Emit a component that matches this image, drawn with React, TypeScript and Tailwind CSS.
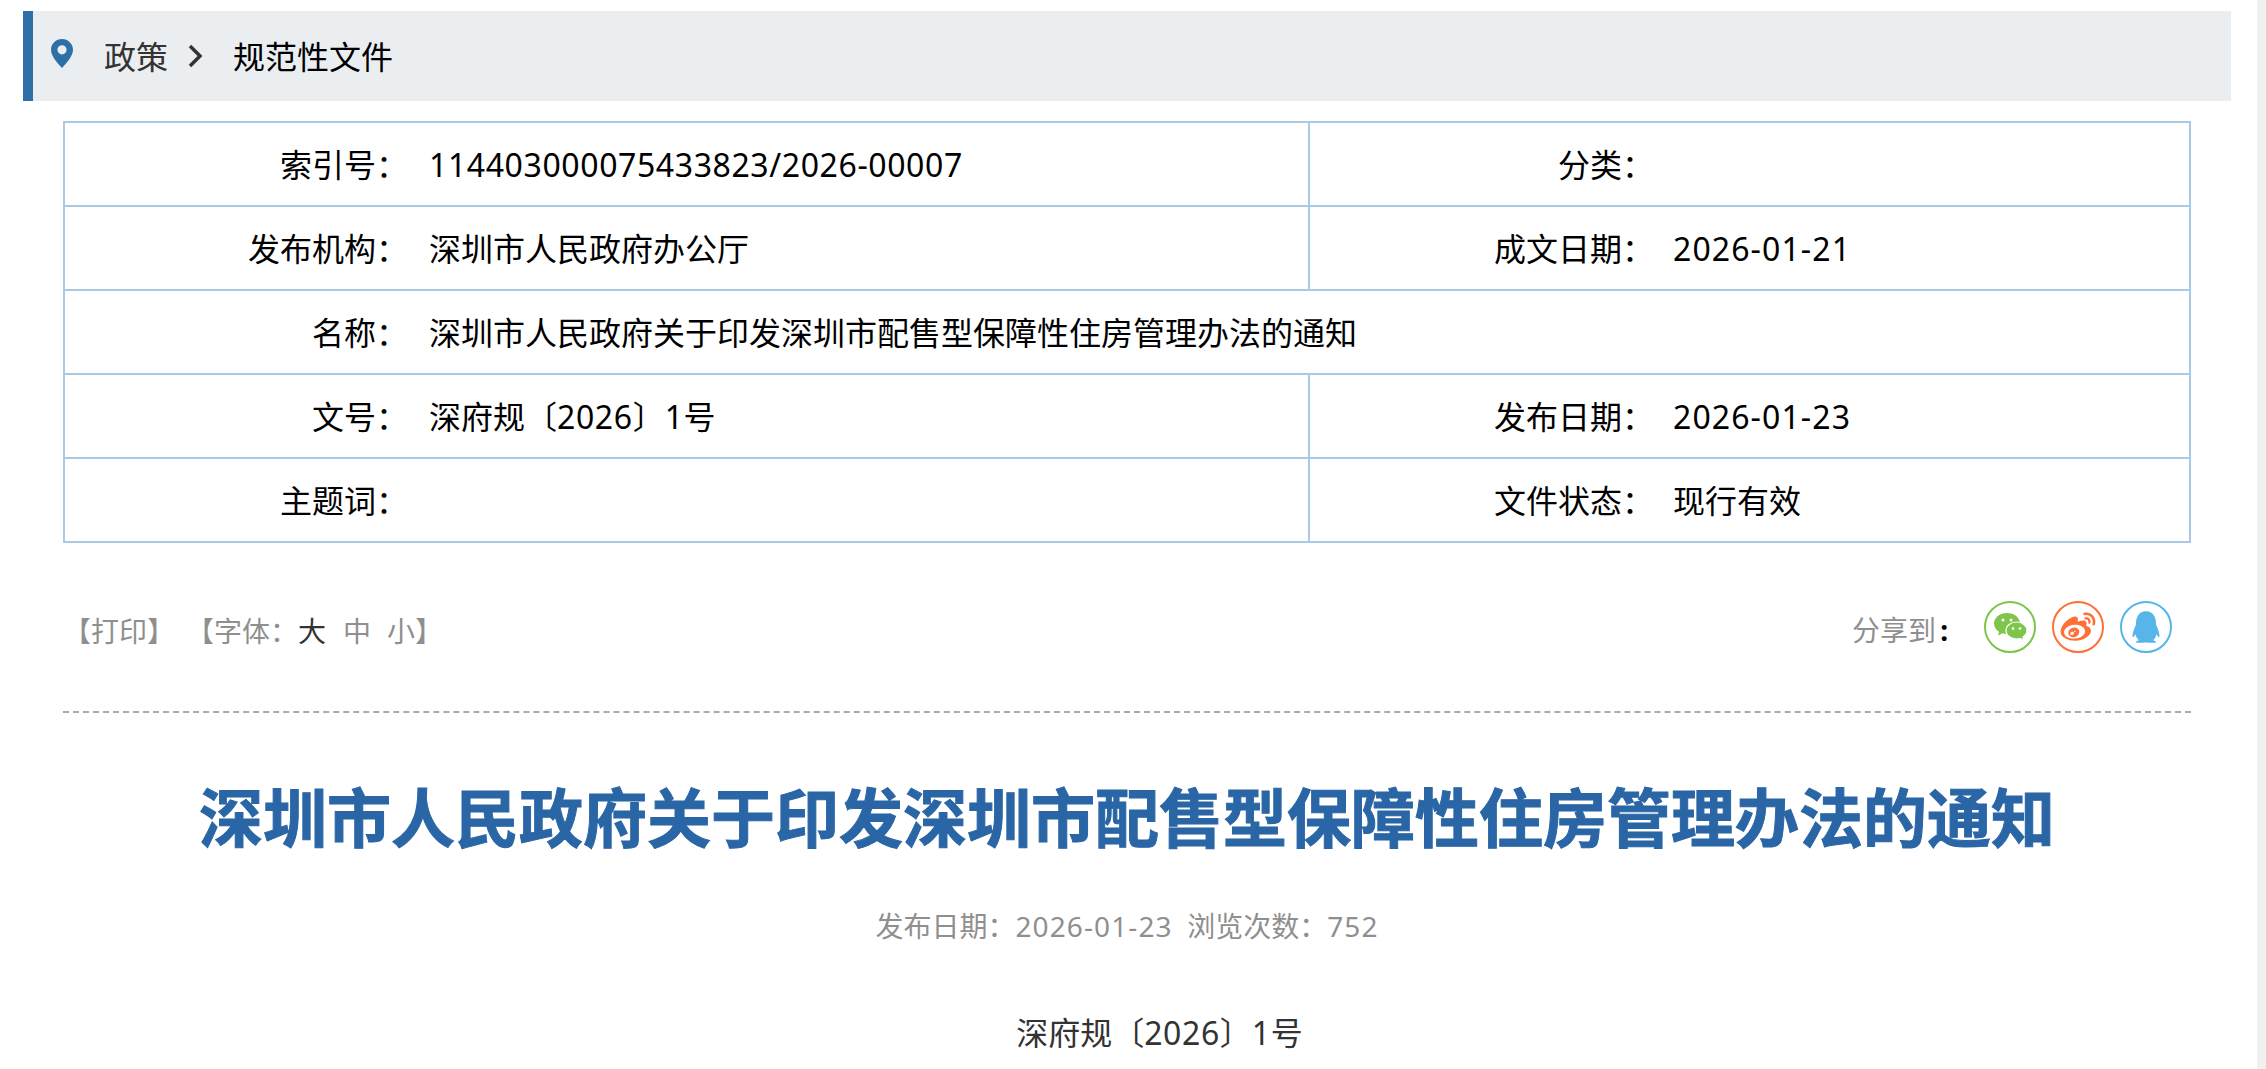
import type { ReactNode } from 'react';
import { RiWeiboFill, RiQqFill } from 'react-icons/ri';

const font = "font-['Noto_Sans','Noto_Sans_CJK_SC',sans-serif]";

function N({ children }: { children: ReactNode }) {
  return <span className="tracking-[0.6px]">{children}</span>;
}

function D({ children }: { children: ReactNode }) {
  return <span className="tracking-[1.1px]">{children}</span>;
}

function Label({ text, right }: { text: string; right?: boolean }) {
  return (
    <td className={`text-right pt-[2px] border-y-2 border-[#a9c9e4] text-black ${right ? 'pr-[19px]' : 'pr-[21px]'}`}>
      {text}
    </td>
  );
}

function Value({ children, span, line }: { children?: ReactNode; span?: number; line?: boolean }) {
  return (
    <td colSpan={span} className={`pt-[2px] border-y-2 border-[#a9c9e4] text-black ${line ? 'border-r-2' : ''}`}>
      {children}
    </td>
  );
}

function WechatIcon() {
  return (
    <svg width="33" height="28" viewBox="0 0 33 28">
      <path fill="#7fc54b" d="M13 0C5.800 0 0 4.700 0 10.500 0 13.900 2 16.900 5 18.800L4 22.500 8.500 20.300C10 20.800 11.500 21 13 21 20.200 21 26 16.300 26 10.500 26 4.700 20.200 0 13 0Z" />
      <path fill="#7fc54b" stroke="#fff" strokeWidth="1.200" d="M22.500 9C16.700 9 12 12.800 12 17.500 12 22.200 16.700 26 22.500 26 23.700 26 24.900 25.800 26 25.500L30 27.500 29 24C31.400 22.400 33 20.100 33 17.500 33 12.800 28.300 9 22.500 9Z" />
      <circle cx="9" cy="7" r="1.500" fill="#fff" />
      <circle cx="17" cy="7" r="1.500" fill="#fff" />
      <circle cx="19" cy="15.500" r="1.300" fill="#fff" />
      <circle cx="26" cy="15.500" r="1.300" fill="#fff" />
    </svg>
  );
}

export default function App() {
  return (
    <div className={`flex h-[1069px] overflow-hidden bg-white ${font}`}>
      <div className="flex-1 min-w-0">
        {/* breadcrumb */}
        <div className="mt-[11px] ml-[23px] w-[2208px] h-[90px] flex items-center bg-[#ebeef1] border-l-[10px] border-[#2d6fa6] text-[32px]">
          <svg width="22" height="29" viewBox="0 0 22 29" className="ml-[18px] mb-[6px]">
            <path
              fillRule="evenodd"
              fill="#2d6fa6"
              d="M11 0C5 0 0 4.800 0 10.800 0 17 7 25 11 29 15 25 22 17 22 10.800 22 4.800 17 0 11 0ZM11 6.200A4.600 4.600 0 1 1 11 15.400 4.600 4.600 0 0 1 11 6.200Z"
            />
          </svg>
          <span className="ml-[31px] pt-[2px] text-[#333]">政策</span>
          <svg width="14" height="24" viewBox="0 0 14 24" className="ml-[20px]">
            <path d="M2 2L12 12L2 22" fill="none" stroke="#333" strokeWidth="3.500" />
          </svg>
          <span className="ml-[31px] pt-[2px] text-black">规范性文件</span>
        </div>

        {/* info table */}
        <table className="mt-[20px] ml-[63px] w-[2128px] table-fixed border-collapse border-2 border-[#a9c9e4] text-[32px] [&_tr]:h-[84px]">
          <colgroup>
            <col className="w-[365px]" />
            <col className="w-[880px]" />
            <col className="w-[364px]" />
            <col />
          </colgroup>
          <tbody>
            <tr>
              <Label text="索引号：" />
              <Value line><N>114403000075433823/2026-00007</N></Value>
              <Label text="分类：" right />
              <Value />
            </tr>
            <tr>
              <Label text="发布机构：" />
              <Value line>深圳市人民政府办公厅</Value>
              <Label text="成文日期：" right />
              <Value><D>2026-01-21</D></Value>
            </tr>
            <tr>
              <Label text="名称：" />
              <Value span={3}>深圳市人民政府关于印发深圳市配售型保障性住房管理办法的通知</Value>
            </tr>
            <tr>
              <Label text="文号：" />
              <Value line>深府规〔<N>2026</N>〕<N>1</N>号</Value>
              <Label text="发布日期：" right />
              <Value><D>2026-01-23</D></Value>
            </tr>
            <tr>
              <Label text="主题词：" />
              <Value line />
              <Label text="文件状态：" right />
              <Value>现行有效</Value>
            </tr>
          </tbody>
        </table>

        {/* tools */}
        <div className="ml-[63px] mt-[58px] w-[2128px] h-[112px] border-b-2 border-dashed border-[#aaa] flex justify-between text-[28px] text-[#8f8f8f]">
          <div className="h-[60px] flex items-center whitespace-pre">
            <span>【打印】</span>
            <span className="ml-[11px]">【字体：</span>
            <span className="text-[#333]">大</span>
            <span className="ml-[17px]">中</span>
            <span className="ml-[16px]">小】</span>
          </div>
          <div className="h-[52px] flex items-center mr-[19px]">
            <span className="mt-[6px]">分享到</span>
            <span className="ml-[4px] mt-[6px] font-bold text-black">:</span>
            <span className="ml-[36px] w-[52px] h-[52px] rounded-full border-2 border-[#7fc54b] flex items-center justify-center">
              <WechatIcon />
            </span>
            <span className="ml-[16px] w-[52px] h-[52px] rounded-full border-2 border-[#ff6f37] flex items-center justify-center text-[#ff6f37]">
              <RiWeiboFill size={38} />
            </span>
            <span className="ml-[16px] w-[52px] h-[52px] rounded-full border-2 border-[#57b5ea] flex items-center justify-center text-[#57b5ea]">
              <RiQqFill size={38} />
            </span>
          </div>
        </div>

        {/* article head */}
        <h1 className="mt-[63px] ml-[63px] w-[2128px] text-center text-[64px] font-bold leading-[1.3] text-[#2a66a6] [-webkit-text-stroke:1px_#2a66a6]">
          深圳市人民政府关于印发深圳市配售型保障性住房管理办法的通知
        </h1>
        <p className="mt-[46px] ml-[63px] w-[2128px] text-center text-[28px] text-[#8f8f8f] whitespace-pre">
          发布日期：<D>2026-01-23</D>  浏览次数：<D>752</D>
        </p>
        <p className="mt-[62px] ml-[63px] w-[2128px] pl-[65px] text-center text-[32px] text-[#333]">
          深府规〔<N>2026</N>〕<N>1</N>号
        </p>
      </div>
      <div className="w-[9px] bg-[#f1f1f1]" />
    </div>
  );
}
